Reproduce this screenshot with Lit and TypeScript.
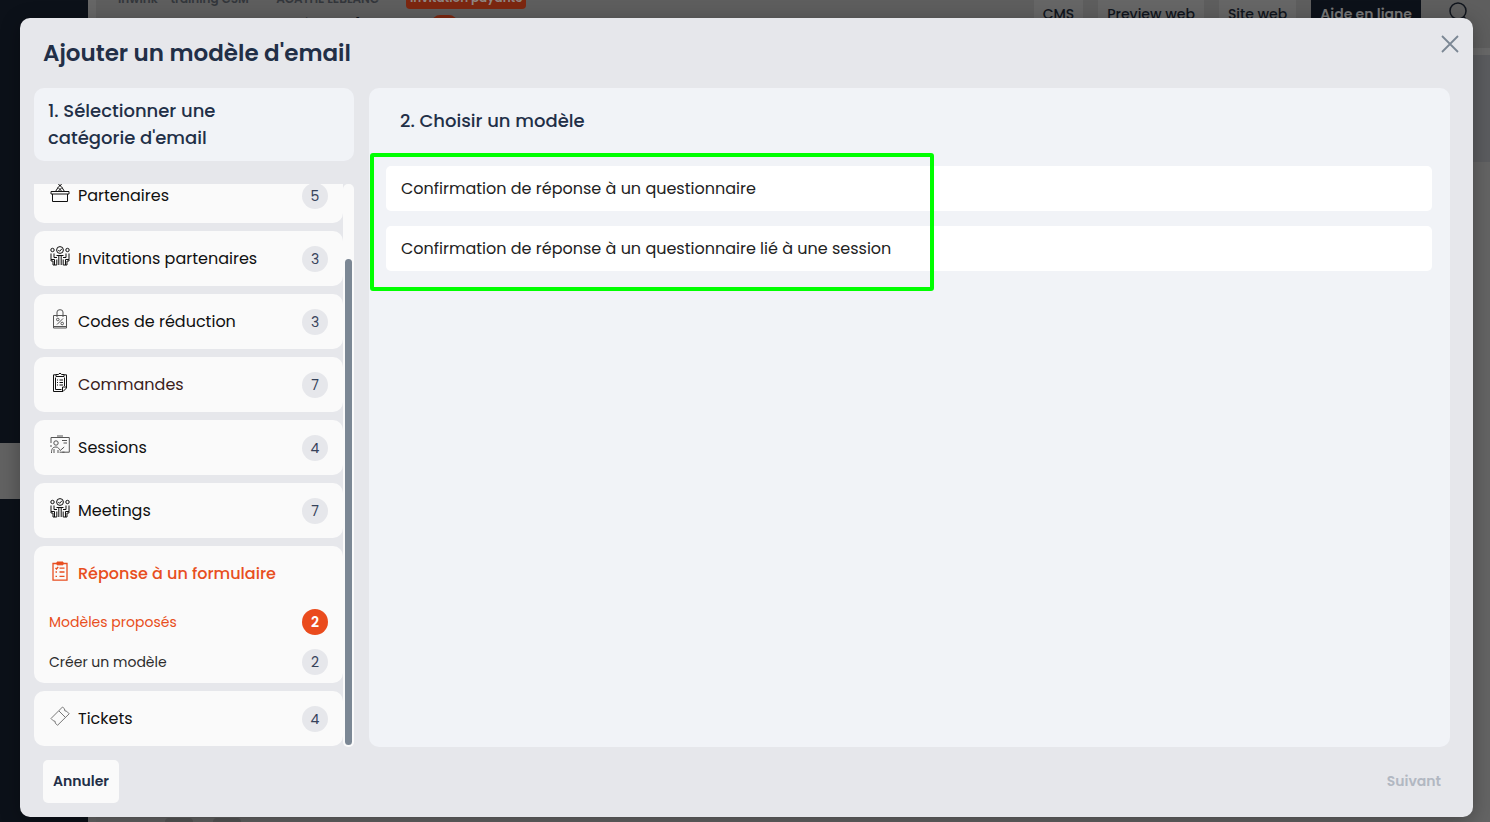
import { LitElement, html, css, svg, nothing } from "lit";
import { customElement, property, query, state } from "lit/decorators.js";
import { classMap } from "lit/directives/class-map.js";

const people = svg`
  <circle cx="2.5" cy="4" r="1.7"/><circle cx="17.5" cy="4" r="1.7"/>
  <circle cx="10" cy="4" r="3.4"/><path d="M8.3 4l1.3 1.3 2.3-2.5"/>
  <path d="M1 7.5v6h3.500v5.500M4 7.500v4h3M19 7.500v6h-3.500v5.500M16 7.500v4h-3"/>
  <path d="M1 13.500V15h2v4h3.800v-5.500M19 13.500V15h-2v4h-3.800v-5.500M6.500 9.500h7M8.800 9.500v9.500M11.200 9.500v9.500"/>`;

const glyphs = {
  partners: svg`
    <path d="M1 8.5h18v2.5H1zM2.5 11v7.5h15V11"/>
    <path d="M5.5 8.5l2.5-4 2-2 2 2 2.5 4M8 4.500l4 4M12 4.500l-4 4M8.500 1l1.500 2 1.500-2"/>`,
  people,
  bag: svg`
    <path d="M3.500 6.500h13v12.500h-13zM7 8V3q0-2.300 3-2.300T13 3v5" />
    <path d="M7 15.500l6-6M3.500 17.500h13"/><circle cx="7.800" cy="10.500" r="1.300"/><circle cx="12.200" cy="14.500" r="1.300"/>`,
  order: svg`
    <path d="M6 2.800H3.500v16.700h9.500l3.500-3.500V2.800H14M6 4.500h8V2.500h-2.300q-1.700-2.800-3.400 0H6z"/>
    <path d="M5.500 5.500v12h6M14.500 5.500v8.500M7 8h1M9.500 8H13M7 10.500h1M9.500 10.500H13M7 13h1M9.500 13H13M12.500 19v-4h4"/>`,
  board: svg`
    <path d="M7 1h6M1 8V2.500h18.300v14.700h-7M1 12v-2"/>
    <circle cx="6" cy="8" r="2.200"/><path d="M1.500 18c0-4 1-6 4.500-6 2.500 0 3 2 4.200 3.500l4-3.500M4 14v4M8 15v3M12 5.500h5M13.500 8H17M9.500 17.200h5"/>`,
  form: svg`
    <path d="M7 2.500H3v16.700h14V2.500h-4" stroke-width="1.300"/><path d="M7 1h6v2.800H7z" fill="currentColor"/>
    <path d="M5.500 7l1 1 1.700-2M9.500 7.200H14.500M5.500 11h1.500M9.500 11h5M5.500 15.300h1.500M9.500 15.300h5" stroke-width="1.300"/>`,
  ticket: svg`
    <path d="M1 12.500L12.500 1l2 1.800q-.5 2.700 2.200 2.500l2.500 2.500L7.500 19.300l-2.200-2.200q.6-2.400-2-2.300zM9 5l6 6" stroke-width=".8"/>`,
};

type GlyphName = keyof typeof glyphs;

interface Category {
  label: string;
  glyph: GlyphName;
  count?: number;
  tone?: string;
  children?: { label: string; count: number }[];
}

const categories: Category[] = [
  { label: "Partenaires", glyph: "partners", count: 5 },
  { label: "Invitations partenaires", glyph: "people", count: 3 },
  { label: "Codes de réduction", glyph: "bag", count: 3, tone: "soft" },
  { label: "Commandes", glyph: "order", count: 7, tone: "brown" },
  { label: "Sessions", glyph: "board", count: 4, tone: "soft" },
  { label: "Meetings", glyph: "people", count: 7 },
  {
    label: "Réponse à un formulaire",
    glyph: "form",
    children: [
      { label: "Modèles proposés", count: 2 },
      { label: "Créer un modèle", count: 2 },
    ],
  },
  { label: "Tickets", glyph: "ticket", count: 4, tone: "soft" },
];

const templates = [
  "Confirmation de réponse à un questionnaire",
  "Confirmation de réponse à un questionnaire lié à une session",
];

const reset = css`
  * { box-sizing: border-box; margin: 0; }
  button { border: 0; padding: 0; background: none; font: inherit; color: inherit; text-align: left; cursor: pointer; }
`;

@customElement("page-backdrop")
class PageBackdrop extends LitElement {
  static styles = [reset, css`
    :host { display: flex; height: 100%; background: #5e5e5e; overflow: hidden; color: #0d1219; }
    .rail { width: 88px; background: #0c1119; flex: none; display: flex; flex-direction: column; justify-content: center; }
    .current { height: 56px; margin-top: 120px; background: #626262; }
    .gutter { width: 8px; background: #666; flex: none; }
    .main { flex: 1; display: flex; flex-direction: column; min-width: 0; }
    .top { display: flex; height: 48px; justify-content: space-between; flex: none; }
    .heading { margin: -12px 0 0 9px; }
    .crumbs { display: flex; gap: 12px; align-items: center; height: 21px; padding-left: 13px; font-size: 12px; font-weight: 600; color: #33363b; }
    .tag { background: #7c2710; color: #8f8683; border-radius: 4px; height: 21px; line-height: 20px; width: 120px; text-align: center; }
    .title { display: flex; gap: 9px; margin-top: 6px; padding-left: 13px; font-size: 22px; line-height: 28px; font-weight: 600; }
    .pill { width: 25px; height: 20px; border-radius: 8px; background: #7c2710; }
    .actions { display: flex; padding-right: 22px; font-size: 14px; font-weight: 500; }
    .action { background: #666; height: 28px; line-height: 28px; padding: 0 9px; margin-right: 15px; text-decoration: none; color: #10151d; }
    .help { background: #0c1119; color: #777; font-weight: 600; margin-right: 27px; }
    .search { width: 20px; height: 24px; fill: none; stroke: #10151d; stroke-width: 1.5; }
    .line { height: 7px; background: #686868; flex: none; }
    .band { height: 107px; background: #5b5c5f; flex: none; }
    .rest { flex: 1; background: #646464; display: flex; align-items: flex-end; gap: 20px; padding-left: 69px; }
    .dot { width: 28px; height: 4px; border-radius: 14px 14px 0 0; background: #575757; }
  `];

  render() {
    return html`
      <div class="rail"><div class="current"></div></div>
      <div class="gutter"></div>
      <div class="main">
        <div class="top">
          <div class="heading">
            <div class="crumbs">
              <span>inwink - training CSM</span><span>·</span><span>AGATHE LEBLANC</span><span>·</span>
              <span class="tag">Invitation payante</span>
            </div>
            <div class="title"><span>Exporter un modèle d'email</span><span class="pill"></span></div>
          </div>
          <div class="actions">
            <a class="action" href="#">CMS</a>
            <a class="action" href="#">Preview web</a>
            <a class="action" href="#">Site web</a>
            <a class="action help" href="#">Aide en ligne</a>
            <svg class="search" viewBox="0 0 20 24"><circle cx="10" cy="11" r="8"/><path d="M15.500 16.500l4 4"/></svg>
          </div>
        </div>
        <div class="line"></div>
        <div class="band"></div>
        <div class="rest"><span class="dot"></span><span class="dot"></span></div>
      </div>`;
  }
}

@customElement("category-card")
class CategoryCard extends LitElement {
  @property({ attribute: false }) category!: Category;
  @state() private picked = 0;

  static styles = [reset, css`
    :host { display: block; background: #fafafa; border-radius: 10px; color: #101010; flex: none; }
    .row { display: flex; align-items: center; width: 100%; height: 55px; padding: 0 15px 0 16px; font-size: 16px; }
    .glyph { width: 20px; height: 20px; margin: 0 8px 5px 0; fill: none; stroke: currentColor; stroke-width: 1; flex: none; }
    .soft .glyph { color: #555; }
    .brown .label { color: #3a1d1a; }
    .label { flex: 1; }
    .open { color: #e84e20; font-weight: 500; }
    .badge { width: 26px; height: 26px; border-radius: 13px; background: #e6e7eb; color: #36425a; font-size: 14px; font-weight: 400; line-height: 26px; text-align: center; }
    .children { padding: 1px 0; }
    .child { display: flex; align-items: center; justify-content: space-between; width: 100%; height: 40px; padding: 0 15px; font-size: 14px; color: #2c2c2c; }
    .active { color: #e84e20; }
    .active .badge { background: #ea4b1d; color: #fff; font-weight: 600; }
  `];

  render() {
    const c = this.category;
    return html`
      <button class=${classMap({ row: true, soft: c.tone === "soft", brown: c.tone === "brown", open: !!c.children })}>
        <svg class="glyph" viewBox="0 0 20 20" aria-hidden="true">${glyphs[c.glyph]}</svg>
        <span class="label">${c.label}</span>
        ${c.count !== undefined ? html`<span class="badge">${c.count}</span>` : nothing}
      </button>
      ${c.children
        ? html`<div class="children">
            ${c.children.map((child, i) => html`
              <button class=${classMap({ child: true, active: i === this.picked })} @click=${() => (this.picked = i)}>
                <span>${child.label}</span><span class="badge">${child.count}</span>
              </button>`)}
          </div>`
        : nothing}`;
  }
}

@customElement("app-root")
class AppRoot extends LitElement {
  @query(".list") private list!: HTMLElement;

  static styles = [reset, css`
    :host { display: block; position: relative; height: 100vh; overflow: hidden; font-family: Poppins, Inter, sans-serif; color: #222f47; }
    .dialog { position: absolute; inset: 18px 17px 5px 20px; display: flex; flex-direction: column; padding: 0 23px 14px 14px; background: #e6e7eb; border-radius: 10px; box-shadow: 0 4px 20px rgba(0, 0, 0, 0.3); }
    .head { display: flex; justify-content: space-between; height: 70px; padding-left: 9px; flex: none; }
    .title { font-size: 23px; line-height: 70px; font-weight: 600; }
    .close { width: 18px; height: 18px; margin: 17px -9px 0 0; flex: none; }
    .cross { display: block; width: 18px; height: 18px; stroke: #7b8794; stroke-width: 1.8; fill: none; }
    .body { flex: 1; min-height: 0; display: grid; grid-template-columns: 320px minmax(0, 1fr); grid-template-rows: minmax(0, 1fr); gap: 15px; }
    .left { display: flex; flex-direction: column; gap: 23px; min-height: 0; }
    .step { font-size: 18px; line-height: 27px; font-weight: 500; }
    .boxed { background: #f1f3f7; border-radius: 10px; padding: 9px 14px 10px; }
    .scroller { flex: 1; min-height: 0; display: flex; }
    .list { flex: 1; display: flex; flex-direction: column; gap: 8px; overflow-y: auto; scrollbar-width: none; padding-bottom: 1px; }
    .track { width: 11px; display: flex; flex-direction: column; justify-content: flex-end; padding: 2px; background: #fafafa; border-radius: 5px; }
    .thumb { height: 87%; border-radius: 4px; background: #7b8794; }
    .panel { background: #f1f3f7; border-radius: 10px; padding: 19px 18px 0 17px; }
    .choose { padding: 0 14px; margin-bottom: 32px; }
    .options { position: relative; display: flex; flex-direction: column; gap: 15px; }
    .option { height: 45px; padding: 0 15px; background: #fff; border-radius: 5px; font-size: 16px; color: #222; }
    .marker { position: absolute; inset: -13px auto -20px -16px; width: 564px; border: 4px solid #00ff00; border-radius: 3px; pointer-events: none; }
    .foot { display: flex; justify-content: space-between; align-items: center; padding: 13px 9px 0; font-size: 14px; font-weight: 600; flex: none; }
    .cancel { height: 43px; padding: 0 10px; background: #fafafa; border-radius: 5px; }
    .next { color: #b2b8c2; }
  `];

  firstUpdated() {
    requestAnimationFrame(() => (this.list.scrollTop = this.list.scrollHeight));
  }

  render() {
    return html`
      <page-backdrop></page-backdrop>
      <section class="dialog" role="dialog" aria-labelledby="dialog-title">
        <header class="head">
          <h1 class="title" id="dialog-title">Ajouter un modèle d'email</h1>
          <button class="close" aria-label="Fermer">
            <svg class="cross" viewBox="0 0 18 18"><path d="M1 1l16 16M17 1L1 17"/></svg>
          </button>
        </header>
        <div class="body">
          <div class="left">
            <h2 class="step boxed">1. Sélectionner une<br />catégorie d'email</h2>
            <div class="scroller">
              <div class="list">
                ${categories.map((c) => html`<category-card .category=${c}></category-card>`)}
              </div>
              <div class="track"><div class="thumb"></div></div>
            </div>
          </div>
          <div class="panel">
            <h2 class="step choose">2. Choisir un modèle</h2>
            <div class="options">
              ${templates.map((t) => html`<button class="option">${t}</button>`)}
              <div class="marker"></div>
            </div>
          </div>
        </div>
        <footer class="foot">
          <button class="cancel">Annuler</button>
          <button class="next" disabled>Suivant</button>
        </footer>
      </section>`;
  }
}
